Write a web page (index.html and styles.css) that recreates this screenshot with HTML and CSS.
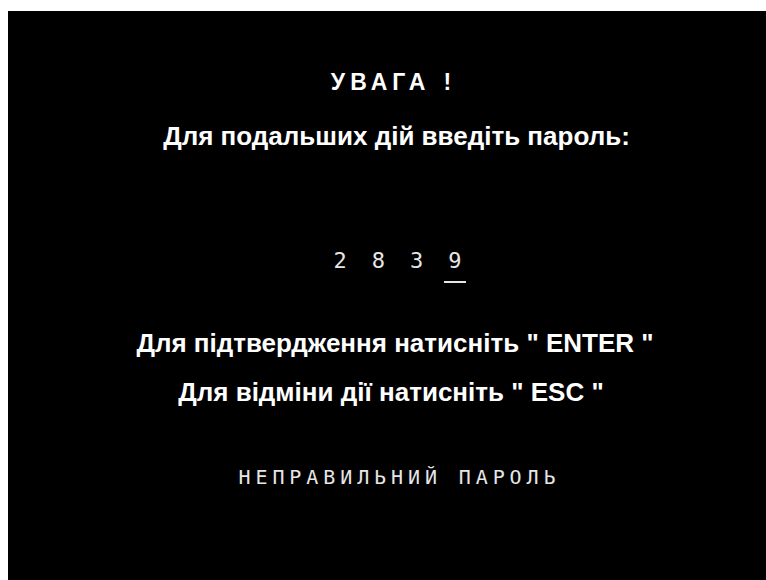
FILE: index.html
```html
<!DOCTYPE html>
<html lang="uk">
<head>
<meta charset="utf-8">
<title>Пароль</title>
<link rel="stylesheet" href="styles.css">
</head>
<body>
<main class="screen">
  <h1 class="title">УВАГА<span class="bang">!</span></h1>
  <p class="line prompt">Для подальших дій введіть пароль:</p>
  <div class="code">
    <span class="digit">2</span>
    <span class="digit">8</span>
    <span class="digit">3</span>
    <span class="digit digit-current">9</span>
  </div>
  <p class="line confirm">Для підтвердження натисніть " ENTER "</p>
  <p class="line cancel">Для відміни дії натисніть " ESC "</p>
  <p class="status">НЕПРАВИЛЬНИЙ ПАРОЛЬ</p>
</main>
</body>
</html>
```
FILE: styles.css
```css
html, body {
  margin: 0;
  background: #fff;
}

body {
  padding: 11px 0 0 8px;
  height: 569px;
  overflow: hidden;
}

.screen {
  box-sizing: border-box;
  height: 569px;
  background: #000;
  color: #fff;
  padding: 56px 0 0 16px;
  display: flex;
  flex-direction: column;
  align-items: center;
  font-family: "Liberation Sans", Arial, sans-serif;
  font-weight: bold;
}

.title {
  margin: 0 8px 0 0;
  font-size: 23px;
  line-height: 30px;
  letter-spacing: 5px;
  font-weight: bold;
}

.bang {
  margin-left: 13px;
  letter-spacing: 0;
}

.line {
  margin: 0;
  font-size: 26px;
  line-height: 30px;
  white-space: pre;
}

.prompt { margin: 24px 0 0 3px; }
.confirm { margin-top: 52px; }
.cancel { margin: 19px 8px 0 0; }

.code {
  margin: 95px 0 0 5px;
  display: flex;
  gap: 25px;
  font-family: "DejaVu Sans Mono", monospace;
  font-weight: normal;
  font-size: 22px;
  line-height: 30px;
  color: #e6e6e6;
}

.digit {
  position: relative;
}

/* input cursor under the last typed digit */
.digit-current::after {
  content: "";
  position: absolute;
  left: -4.5px;
  right: -4.5px;
  bottom: -7px;
  height: 2px;
  background: #e6e6e6;
}

.status {
  margin: 55px 0 0 9px;
  font-family: "DejaVu Sans Mono", monospace;
  font-weight: normal;
  font-size: 20px;
  line-height: 30px;
  letter-spacing: 4.9px;
  color: #e6e6e6;
}
```
